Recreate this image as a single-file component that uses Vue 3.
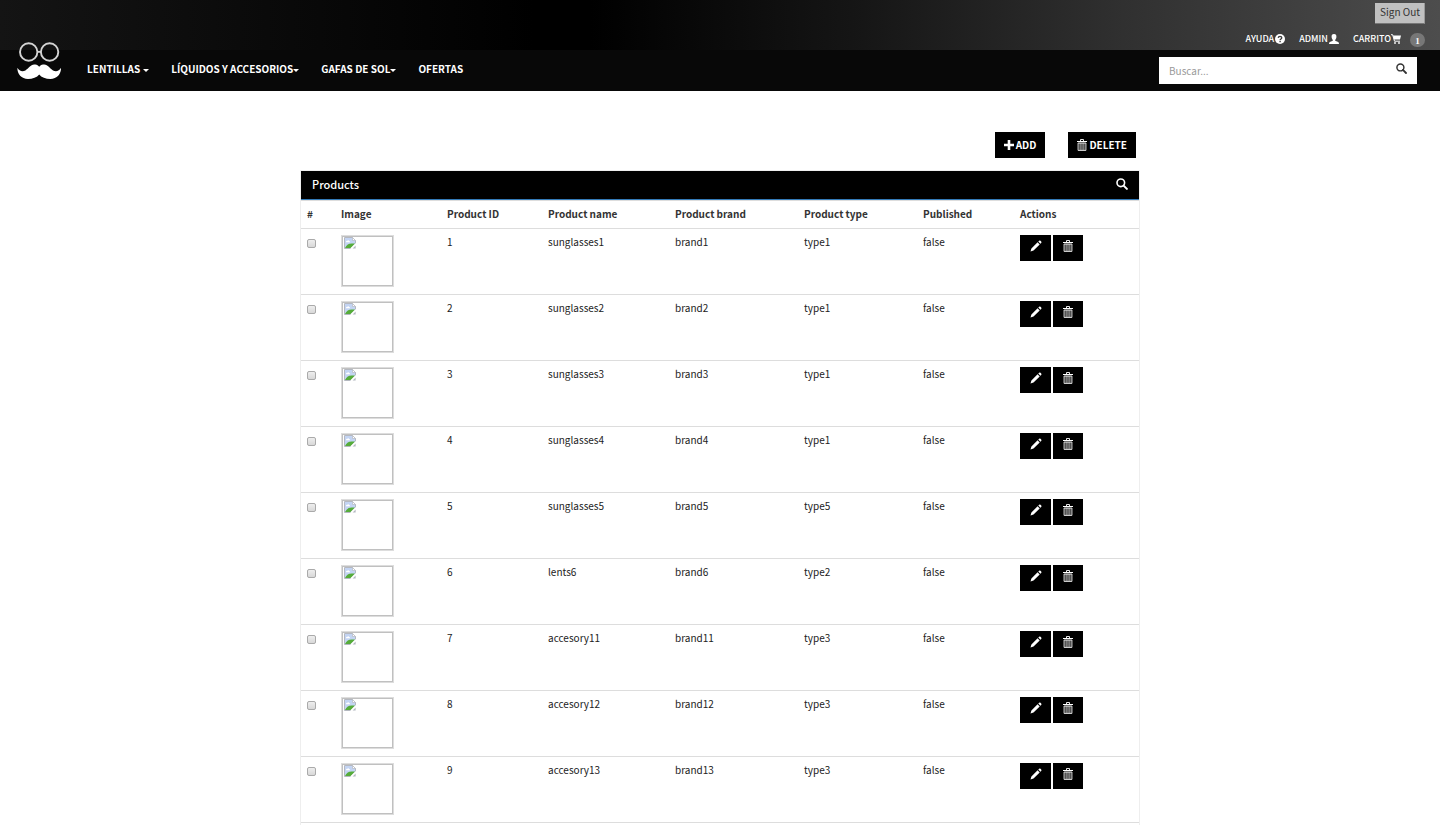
<script setup>
import { ref } from 'vue'

const menu = ref([
  { label: 'LENTILLAS', caret: true, spaced: true },
  { label: 'LÍQUIDOS Y ACCESORIOS', caret: true },
  { label: 'GAFAS DE SOL', caret: true },
  { label: 'OFERTAS' },
])

const columns = ['#', 'Image', 'Product ID', 'Product name', 'Product brand', 'Product type', 'Published', 'Actions']

const products = ref([
  { id: 1, name: 'sunglasses1', brand: 'brand1', type: 'type1' },
  { id: 2, name: 'sunglasses2', brand: 'brand2', type: 'type1' },
  { id: 3, name: 'sunglasses3', brand: 'brand3', type: 'type1' },
  { id: 4, name: 'sunglasses4', brand: 'brand4', type: 'type1' },
  { id: 5, name: 'sunglasses5', brand: 'brand5', type: 'type5' },
  { id: 6, name: 'lents6', brand: 'brand6', type: 'type2' },
  { id: 7, name: 'accesory11', brand: 'brand11', type: 'type3' },
  { id: 8, name: 'accesory12', brand: 'brand12', type: 'type3' },
  { id: 9, name: 'accesory13', brand: 'brand13', type: 'type3' },
])
const published = false
const query = ref('')
</script>

<template>
  <svg class="defs" aria-hidden="true">
    <symbol id="i-search" viewBox="0 0 12 12">
      <circle cx="4.8" cy="4.8" r="3.8" fill="none" stroke="currentColor" stroke-width="1.6" />
      <path d="M7.6 7.6 L10.9 10.9" stroke="currentColor" stroke-width="2" stroke-linecap="round" />
    </symbol>
    <symbol id="i-trash" viewBox="0 0 10 12">
      <path d="M3.5 2 V.5 H6.5 V2" fill="none" stroke="currentColor" stroke-width=".9" />
      <path d="M0 2.5 H10" stroke="currentColor" stroke-width="1" />
      <path d="M1.1 4 V11.4 H8.9 V4 Z" fill="none" stroke="currentColor" stroke-width=".9" />
      <path d="M3.1 4 V11 M5 4 V11 M6.9 4 V11" stroke="currentColor" stroke-width=".8" />
    </symbol>
    <symbol id="i-pencil" viewBox="0 0 12 12">
      <path d="M.5 11.5 L1.4 8.5 L7.6 2.3 L9.7 4.4 L3.5 10.6 Z M8.3 1.6 L9.1 .8 Q9.8 .2 10.5 .8 L11.2 1.5 Q11.8 2.2 11.2 2.9 L10.4 3.7 Z" fill="currentColor" />
    </symbol>
  </svg>

  <header class="header">
    <a class="logo" href="#" aria-label="Inicio">
      <svg viewBox="0 0 46 40">
        <g fill="none" stroke="#d4d4d4" stroke-width="1.9">
          <circle cx="12.7" cy="11" r="8.7" />
          <circle cx="33.6" cy="11" r="8.7" />
          <path d="M21.3 10.8 H25" />
        </g>
        <path d="M23.2 25.8 C21.6 23.6 19.6 23.4 18.2 23.4 C14.4 23.6 12.6 27.2 9.4 29.4 C6.6 31 3.2 30.2 1.4 26.8 C1 33 5.6 38 12 38 C16.6 38 21 36.6 23.2 33.6 C25.4 36.6 29.8 38 34.4 38 C40.8 38 45.4 33 45 26.8 C43.2 30.2 39.8 31 37 29.4 C33.8 27.2 32 23.6 28.2 23.4 C26.8 23.4 24.8 23.6 23.2 25.8 Z" fill="#fff" />
      </svg>
    </a>
    <div class="topbar">
      <button class="signout" type="button">Sign Out</button>
      <nav class="account" aria-label="Cuenta">
        <a href="#">AYUDA
          <svg class="ic10" viewBox="0 0 10 10">
            <circle cx="5" cy="5" r="5" fill="#fff" />
            <path d="M3.2 3.9 Q3.3 2.3 5 2.3 Q6.8 2.4 6.8 3.8 Q6.8 4.6 5.8 5.1 Q5.1 5.5 5.1 6.2" fill="none" stroke="#3d3d3d" stroke-width="1.3" />
            <path d="M4.4 7 H5.8 V8.2 H4.4 Z" fill="#3d3d3d" />
          </svg>
        </a>
        <a href="#">ADMIN
          <svg class="ic10" viewBox="0 0 10 10">
            <path d="M5 0 C6.8 0 7.6 1.2 7.4 2.9 C7.3 4.3 6.7 5.2 6.2 5.8 V6.7 L9.2 8.1 Q10 8.5 10 10 H0 Q0 8.5 .8 8.1 L3.8 6.7 V5.8 C3.3 5.2 2.7 4.3 2.6 2.9 C2.4 1.2 3.2 0 5 0 Z" fill="#fff" />
          </svg>
        </a>
        <a class="cart" href="#">CARRITO<svg class="ic10" viewBox="0 0 10 10">
            <path d="M0 .7 H1.6 L3.5 7.2 H9" fill="none" stroke="#fff" stroke-width="1" />
            <path d="M2 1.6 H10 L9 5.6 H3.2 Z" fill="#fff" />
            <circle cx="4" cy="9" r=".9" fill="#fff" />
            <circle cx="8" cy="9" r=".9" fill="#fff" />
          </svg>
          <span class="badge">1</span>
        </a>
      </nav>
    </div>
    <div class="navbar">
      <nav class="menu" aria-label="Principal">
        <a v-for="m in menu" :key="m.label" href="#">{{ m.label }}<i v-if="m.caret" class="caret" :class="{ spaced: m.spaced }"></i></a>
      </nav>
      <form class="search" role="search" @submit.prevent>
        <input v-model="query" type="text" placeholder="Buscar..." aria-label="Buscar" />
        <button type="submit" aria-label="Buscar"><svg><use href="#i-search" /></svg></button>
      </form>
    </div>
  </header>

  <main class="content">
    <div class="toolbar">
      <button class="btn" type="button">
        <svg class="plus" viewBox="0 0 10 10"><path d="M5 0 V10 M0 5 H10" stroke="#fff" stroke-width="2.6" /></svg>ADD
      </button>
      <button class="btn" type="button"><svg class="bin"><use href="#i-trash" /></svg>DELETE</button>
    </div>
    <section class="panel">
      <div class="heading">
        <h1>Products</h1>
        <button type="button" aria-label="Search products"><svg><use href="#i-search" /></svg></button>
      </div>
      <table>
        <colgroup>
          <col class="c1" /><col class="c2" /><col class="c3" /><col class="c4" /><col class="c5" /><col class="c6" /><col class="c7" /><col />
        </colgroup>
        <thead>
          <tr><th v-for="c in columns" :key="c" scope="col">{{ c }}</th></tr>
        </thead>
        <tbody>
          <tr v-for="p in products" :key="p.id">
            <td><input class="check" type="checkbox" :aria-label="'Select ' + p.name" /></td>
            <td>
              <div class="thumb">
                <svg viewBox="0 0 12 12">
                  <path d="M.5 .5 H8.5 L11.5 3.5 V6.5 L6.5 11.5 H.5 Z" fill="#c3d4f3" stroke="#b4b8c0" />
                  <path d="M8.5 .5 V3.5 H11.5 Z" fill="#fff" stroke="#b4b8c0" stroke-width=".7" />
                  <path d="M2 5 Q2 3.6 3.4 3.8 Q4.4 2.6 5.2 4 Q6.4 4.2 6 5.2 H2 Z" fill="#fff" />
                  <path d="M1 11 Q3.6 6 8.6 6.6 L11 6.4 L6.8 11 Z" fill="#56ac3a" />
                  <path d="M12 6.6 L6.8 11.6" stroke="#fff" stroke-width="1.2" />
                  <path d="M11.6 8.4 V11.6 H8.6 Z" fill="#b4b8c0" />
                </svg>
              </div>
            </td>
            <td>{{ p.id }}</td>
            <td>{{ p.name }}</td>
            <td>{{ p.brand }}</td>
            <td>{{ p.type }}</td>
            <td>{{ published }}</td>
            <td>
              <div class="actions">
                <button type="button" :aria-label="'Edit ' + p.name"><svg><use href="#i-pencil" /></svg></button>
                <button type="button" :aria-label="'Delete ' + p.name"><svg class="bin"><use href="#i-trash" /></svg></button>
              </div>
            </td>
          </tr>
        </tbody>
      </table>
    </section>
  </main>
</template>

<style>
body {
  background: #fff;
  color: #222;
  font: 10px/14px "Noto Sans CJK SC", "Noto Sans", sans-serif;
}
</style>

<style scoped>
* { box-sizing: border-box; }
button, input { font: inherit; border: 0; border-radius: 0; margin: 0; padding: 0; }
button { cursor: pointer; }
a { color: #fff; text-decoration: none; }
svg { display: block; flex: none; }
.defs { position: absolute; width: 0; height: 0; }

.header { position: relative; background: #080808; }
.logo { position: absolute; left: 16px; top: 41px; }
.logo svg { width: 46px; height: 40px; }
.topbar {
  display: flex;
  flex-direction: column;
  align-items: flex-end;
  gap: 7px;
  height: 50px;
  padding: 3px 15px 0;
  background: linear-gradient(to right, #141414 0%, #000 37%, #000 41%, #161616 60%, #303030 78%, #4d4d4d 100%);
}
.signout {
  height: 21px;
  padding: 0 4px 2px 5px;
  background: #c0c0c0;
  color: #333;
  border-right: 1px solid #999;
  border-bottom: 1px solid #777;
}
.account { display: flex; gap: 14px; font-size: 9px; font-weight: 500; }
.account a { display: flex; align-items: center; gap: 1px; height: 16px; }
.account .cart { gap: 0; }
.ic10 { width: 10px; height: 10px; }
.badge {
  width: 15px;
  height: 14px;
  margin: 2px 0 0 9px;
  border-radius: 8px;
  background: #777;
  font: bold 9px/16px "Liberation Serif", serif;
  text-align: center;
}
.navbar {
  display: flex;
  justify-content: space-between;
  align-items: center;
  height: 41px;
  padding: 0 23px 0 87px;
}
.menu { display: flex; gap: 22px; padding-bottom: 4px; font-size: 10px; font-weight: 700; }
.menu a { display: flex; align-items: center; }
.caret { margin: 3px 0 0; border: 3px solid transparent; border-top-color: #fff; border-bottom: 0; }
.caret.spaced { margin-left: 3px; }
.search { display: flex; align-items: center; width: 258px; height: 27px; background: #fff; }
.search input { flex: 1; min-width: 0; height: 27px; padding: 0 10px; background: none; color: #333; outline: 0; }
.search input::placeholder { color: #999; opacity: 1; }
.search button { padding: 0 10px 4px; background: none; color: #333; }
.search svg { width: 11px; height: 11px; }

.content { max-width: 840px; margin: 0 auto; padding-top: 41px; }
.toolbar { display: flex; justify-content: flex-end; gap: 23px; padding: 0 4px 12px 0; }
.btn {
  display: flex;
  align-items: center;
  gap: 2px;
  height: 26px;
  padding: 0 9px;
  background: #000;
  color: #fff;
  font-size: 10px;
  font-weight: 700;
}
.plus { width: 10px; height: 10px; }
.bin { width: 10px; height: 12px; }
.panel { border: 1px solid #eee; border-bottom: 0; padding-bottom: 2px; }
.heading {
  display: flex;
  justify-content: space-between;
  align-items: center;
  height: 29px;
  padding: 0 11px 2px;
  background: #000;
  color: #fff;
  border-bottom: 1px solid #337ab7;
}
.heading h1 { margin: 0; font-size: 11px; line-height: 16px; font-weight: 500; }
.heading button { background: none; color: #fff; }
.heading svg { width: 12px; height: 12px; }
table { width: 100%; table-layout: fixed; border-collapse: collapse; }
th, td { border-top: 1px solid #ddd; padding: 6px 0 0 6px; text-align: left; vertical-align: top; }
th { height: 28px; font-weight: 700; color: #333; }
td { height: 66px; }
tbody tr:last-child { border-bottom: 1px solid #ddd; }
.c1 { width: 34px; }
.c2 { width: 106px; }
.c3 { width: 101px; }
.c4 { width: 127px; }
.c5 { width: 129px; }
.c6 { width: 119px; }
.c7 { width: 97px; }
.check {
  display: block;
  appearance: none;
  width: 9px;
  height: 9px;
  margin-top: 4px;
  border: 1px solid #aaa;
  border-radius: 2px;
  background: linear-gradient(#eee, #d8d8d8);
}
.thumb { width: 53px; height: 52px; padding: 1px; border: 1px solid #ddd; outline: 1px solid #c0c0c0; outline-offset: -2px; }
.thumb svg { width: 12px; height: 12px; margin: 0 1px; }
.actions { display: flex; gap: 2px; }
.actions button { display: flex; justify-content: center; width: 31px; height: 26px; padding-top: 5px; background: #000; color: #fff; }
.actions button + button { width: 30px; }
.actions svg { width: 12px; height: 12px; }
.actions .bin { width: 10px; }
</style>
